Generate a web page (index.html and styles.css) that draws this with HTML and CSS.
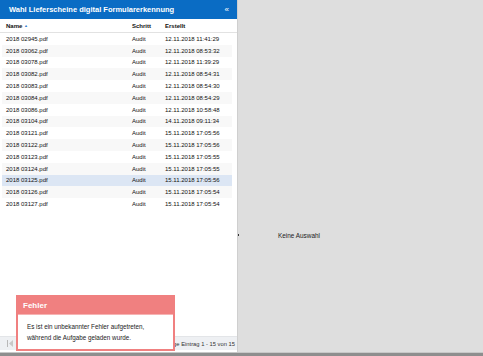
FILE: index.html
```html
<!DOCTYPE html>
<html lang="de">
	<head>
		<meta charset="UTF-8" />
		<meta
			name="viewport"
			content="width=device-width, initial-scale=1.0" />
		<title>Wahl Lieferscheine</title>

		<link rel="stylesheet" href="styles.css">
	</head>
	<body>
		<div class="app">
			<aside class="panel">
				<div class="panel__head">
					<span class="panel__title">Wahl Lieferscheine digital Formularerkennung</span>
					<span class="panel__collapse">&laquo;</span>
				</div>
				<div class="grid">
					<div class="grid__head">
						<div class="cell">Name <span class="sort">&#9650;</span></div>
						<div class="cell">Schritt</div>
						<div class="cell">Erstellt</div>
					</div>
					<div class="grid__body">
						<div class="row"><div class="cell">2018 02945.pdf</div><div class="cell">Audit</div><div class="cell">12.11.2018 11:41:29</div></div>
						<div class="row"><div class="cell">2018 03062.pdf</div><div class="cell">Audit</div><div class="cell">12.11.2018 08:53:32</div></div>
						<div class="row"><div class="cell">2018 03078.pdf</div><div class="cell">Audit</div><div class="cell">12.11.2018 11:39:29</div></div>
						<div class="row"><div class="cell">2018 03082.pdf</div><div class="cell">Audit</div><div class="cell">12.11.2018 08:54:31</div></div>
						<div class="row"><div class="cell">2018 03083.pdf</div><div class="cell">Audit</div><div class="cell">12.11.2018 08:54:30</div></div>
						<div class="row"><div class="cell">2018 03084.pdf</div><div class="cell">Audit</div><div class="cell">12.11.2018 08:54:29</div></div>
						<div class="row"><div class="cell">2018 03086.pdf</div><div class="cell">Audit</div><div class="cell">12.11.2018 10:58:48</div></div>
						<div class="row"><div class="cell">2018 03104.pdf</div><div class="cell">Audit</div><div class="cell">14.11.2018 09:11:34</div></div>
						<div class="row"><div class="cell">2018 03121.pdf</div><div class="cell">Audit</div><div class="cell">15.11.2018 17:05:56</div></div>
						<div class="row"><div class="cell">2018 03122.pdf</div><div class="cell">Audit</div><div class="cell">15.11.2018 17:05:56</div></div>
						<div class="row"><div class="cell">2018 03123.pdf</div><div class="cell">Audit</div><div class="cell">15.11.2018 17:05:55</div></div>
						<div class="row"><div class="cell">2018 03124.pdf</div><div class="cell">Audit</div><div class="cell">15.11.2018 17:05:55</div></div>
						<div class="row row--selected"><div class="cell">2018 03125.pdf</div><div class="cell">Audit</div><div class="cell">15.11.2018 17:05:56</div></div>
						<div class="row"><div class="cell">2018 03126.pdf</div><div class="cell">Audit</div><div class="cell">15.11.2018 17:05:54</div></div>
						<div class="row"><div class="cell">2018 03127.pdf</div><div class="cell">Audit</div><div class="cell">15.11.2018 17:05:54</div></div>
					</div>
				</div>
				<div class="pager">
					<svg class="pager__first" width="6" height="7" viewBox="0 0 6 7">
						<rect x="0" y="0" width="1" height="7" fill="#b8b8b8" />
						<path d="M6 0 L2 3.5 L6 7 Z" fill="#c8c8c8" />
					</svg>
					<span class="pager__info">Anzeige Eintrag 1 - 15 von 15</span>
				</div>
			</aside>
			<div class="splitter"><span class="splitter__dot"></span></div>
			<main class="detail">Keine Auswahl</main>
		</div>
		<div class="statusbar"></div>

		<div class="toast">
			<div class="toast__head">Fehler</div>
			<div class="toast__body">
				Es ist ein unbekannter Fehler aufgetreten,<br />
				während die Aufgabe geladen wurde.
			</div>
		</div>
	</body>
</html>
```

FILE: styles.css
```css
html,
body {
	margin: 0;
	height: 100%;
}
body {
	display: flex;
	flex-direction: column;
	font-family: 'Liberation Sans', Arial, sans-serif;
	font-size: 6px;
	color: #111;
	background-color: #dedede;
	overflow: hidden;
}
.app {
	flex: 1;
	display: flex;
	min-height: 0;
}
.statusbar {
	height: 3px;
	border-top: 1px solid #c8c8c8;
	background-color: #8e8e8e;
}

/* left panel */

.panel {
	width: 237px;
	display: flex;
	flex-direction: column;
	background-color: #fff;
	border-right: 1px solid #cfcfcf;
}
.panel__head {
	height: 19px;
	display: flex;
	align-items: center;
	justify-content: space-between;
	padding: 0 8px 0 9px;
	background-color: #0a6cc4;
	color: #fff;
	font-weight: bold;
	font-size: 7.5px;
}
.panel__collapse {
	font-size: 8px;
	font-weight: normal;
}
.grid {
	flex: 1;
}
.grid__head,
.row {
	display: grid;
	grid-template-columns: 126px 33px 1fr;
	align-items: center;
}
.grid__head {
	height: 13px;
	padding-left: 6px;
	border-bottom: 1px solid #e2e2e2;
	font-weight: bold;
	color: #111;
}
.sort {
	color: #3a7fd0;
	font-size: 4px;
	vertical-align: 1px;
}
.grid__body {
	padding: 0 5px 0 2px;
}
.row {
	height: 11.8px;
	padding-left: 4px;
}
.row:nth-child(even) {
	background-color: #f8f8f8;
}
.row--selected,
.row--selected:nth-child(even) {
	background-color: #dce6f4;
}
.pager {
	height: 13px;
	margin-bottom: 2px;
	display: flex;
	align-items: center;
	justify-content: space-between;
	padding: 0 2px 0 7px;
	background-color: #eef0f3;
	border-top: 1px solid #e3e5e8;
	color: #333;
}
.pager__info {
	font-size: 5.8px;
}

/* splitter and detail */

.splitter {
	width: 2px;
	display: flex;
	align-items: center;
}
.splitter__dot {
	width: 1px;
	height: 2px;
	margin-top: 118px;
	background-color: #333;
}
.detail {
	flex: 1;
	padding: 232px 0 0 38px;
	font-size: 6.4px;
	color: #222;
}

/* error message */

.toast {
	position: absolute;
	left: 16px;
	top: 295px;
	width: 155px;
	border: 2px solid #f08080;
	background-color: #fff;
}
.toast__head {
	height: 17px;
	display: flex;
	align-items: center;
	padding-left: 5px;
	background-color: #f08080;
	border-bottom: 1px solid #f6b3b3;
	color: #fff;
	font-weight: bold;
	font-size: 8px;
}
.toast__body {
	padding: 7px 9px 6px;
	font-size: 6.3px;
	line-height: 10.5px;
	color: #222;
}
```
